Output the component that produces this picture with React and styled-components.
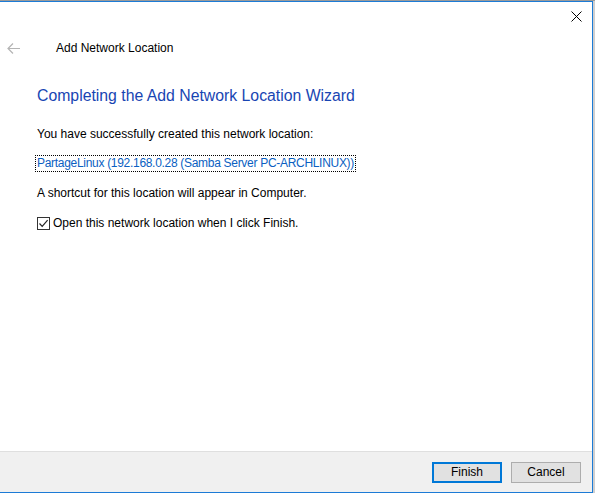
import React from "react";
import styled, { createGlobalStyle } from "styled-components";

const Global = createGlobalStyle`
  html, body { margin: 0; padding: 0; }
  body {
    background: #cfcfcf;
    font-family: "Segoe UI", "Liberation Sans", Arial, sans-serif;
    width: 595px;
    height: 493px;
    overflow: hidden;
  }
`;

export default function App() {
  return (
    <>
      <Global />
      <Frame>
        <Window>
          <TopBar>
            <CloseButton aria-label="Close">
              <svg width="11" height="11" viewBox="0 0 11 11">
                <path d="M0.5 0.5 L10.5 10.5 M10.5 0.5 L0.5 10.5" stroke="#000" strokeWidth="1" fill="none" />
              </svg>
            </CloseButton>
          </TopBar>
          <Header>
            <BackArrow>
              <svg width="13" height="11" viewBox="0 0 13 11">
                <path d="M6 0.5 L1 5.5 L6 10.5 M1 5.5 H13" stroke="#b4b4b4" strokeWidth="1.2" fill="none" />
              </svg>
            </BackArrow>
            <WindowTitle>Add Network Location</WindowTitle>
          </Header>
          <Body>
            <Heading>Completing the Add Network Location Wizard</Heading>
            <Text>You have successfully created this network location:</Text>
            <LinkRow>
              <Link href="#">PartageLinux (192.168.0.28 (Samba Server PC-ARCHLINUX))</Link>
            </LinkRow>
            <Text>A shortcut for this location will appear in Computer.</Text>
            <CheckRow>
              <Box>
                <svg width="11" height="11" viewBox="0 0 11 11">
                  <path d="M1.5 5.5 L4.2 8.3 L9.6 2.2" stroke="#222" strokeWidth="1.2" fill="none" />
                </svg>
              </Box>
              <span>Open this network location when I click Finish.</span>
            </CheckRow>
          </Body>
          <Footer>
            <Button $primary>Finish</Button>
            <Button>Cancel</Button>
          </Footer>
        </Window>
      </Frame>
    </>
  );
}

const Frame = styled.div`
  width: 595px;
  height: 493px;
  padding-top: 1px;
  box-sizing: border-box;
  border-top: 1px solid #9a9a9a;
`;

const Window = styled.div`
  width: 593px;
  height: 492px;
  box-sizing: border-box;
  background: #fff;
  border-top: 1px solid #1c7bd6;
  border-right: 1px solid #1c7bd6;
  border-bottom: 1px solid #1c7bd6;
  margin-top: -1px;
  display: flex;
  flex-direction: column;
`;

const TopBar = styled.div`
  height: 30px;
  display: flex;
  justify-content: flex-end;
`;

const CloseButton = styled.div`
  width: 30px;
  height: 30px;
  display: flex;
  align-items: center;
  justify-content: center;
  margin-right: 1px;
  margin-top: -1px;
`;

const Header = styled.div`
  height: 32px;
  display: flex;
  align-items: center;
`;

const BackArrow = styled.div`
  width: 13px;
  margin-left: 7px;
  display: flex;
`;

const WindowTitle = styled.div`
  margin-left: 36px;
  font-size: 12px;
  color: #000;
`;

const Body = styled.div`
  flex: 1;
  padding: 20px 0 0 37px;
  font-size: 12px;
  color: #000;
`;

const Heading = styled.div`
  font-size: 15.8px;
  color: #1845b3;
  height: 24px;
  line-height: 24px;
  margin-bottom: 18px;
`;

const Text = styled.div`
  height: 16px;
  line-height: 16px;
  margin-bottom: 14px;
`;

const LinkRow = styled.div`
  height: 16px;
  margin-bottom: 13px;
  margin-left: -1px;
`;

const Link = styled.a`
  color: #0b5fc2;
  text-decoration: none;
  letter-spacing: -0.3px;
  outline: 1px dotted #000;
  outline-offset: 0;
  padding: 0 1px;
  line-height: 15px;
  display: inline-block;
`;

const CheckRow = styled.div`
  display: flex;
  align-items: center;
  gap: 3px;
  height: 16px;
  margin-top: 1px;
`;

const Box = styled.div`
  width: 11px;
  height: 11px;
  border: 1px solid #333;
  display: flex;
  background: #fff;
`;

const Footer = styled.div`
  height: 40px;
  background: #f0f0f0;
  border-top: 1px solid #dfdfdf;
  display: flex;
  justify-content: flex-end;
  align-items: center;
  gap: 9px;
  padding-right: 11px;
`;

const Button = styled.div`
  width: 70px;
  height: 21px;
  box-sizing: border-box;
  background: #e1e1e1;
  border: ${(p) => (p.$primary ? "2px solid #0078d7" : "1px solid #adadad")};
  font-size: 12px;
  color: #000;
  display: flex;
  align-items: center;
  justify-content: center;
`;
